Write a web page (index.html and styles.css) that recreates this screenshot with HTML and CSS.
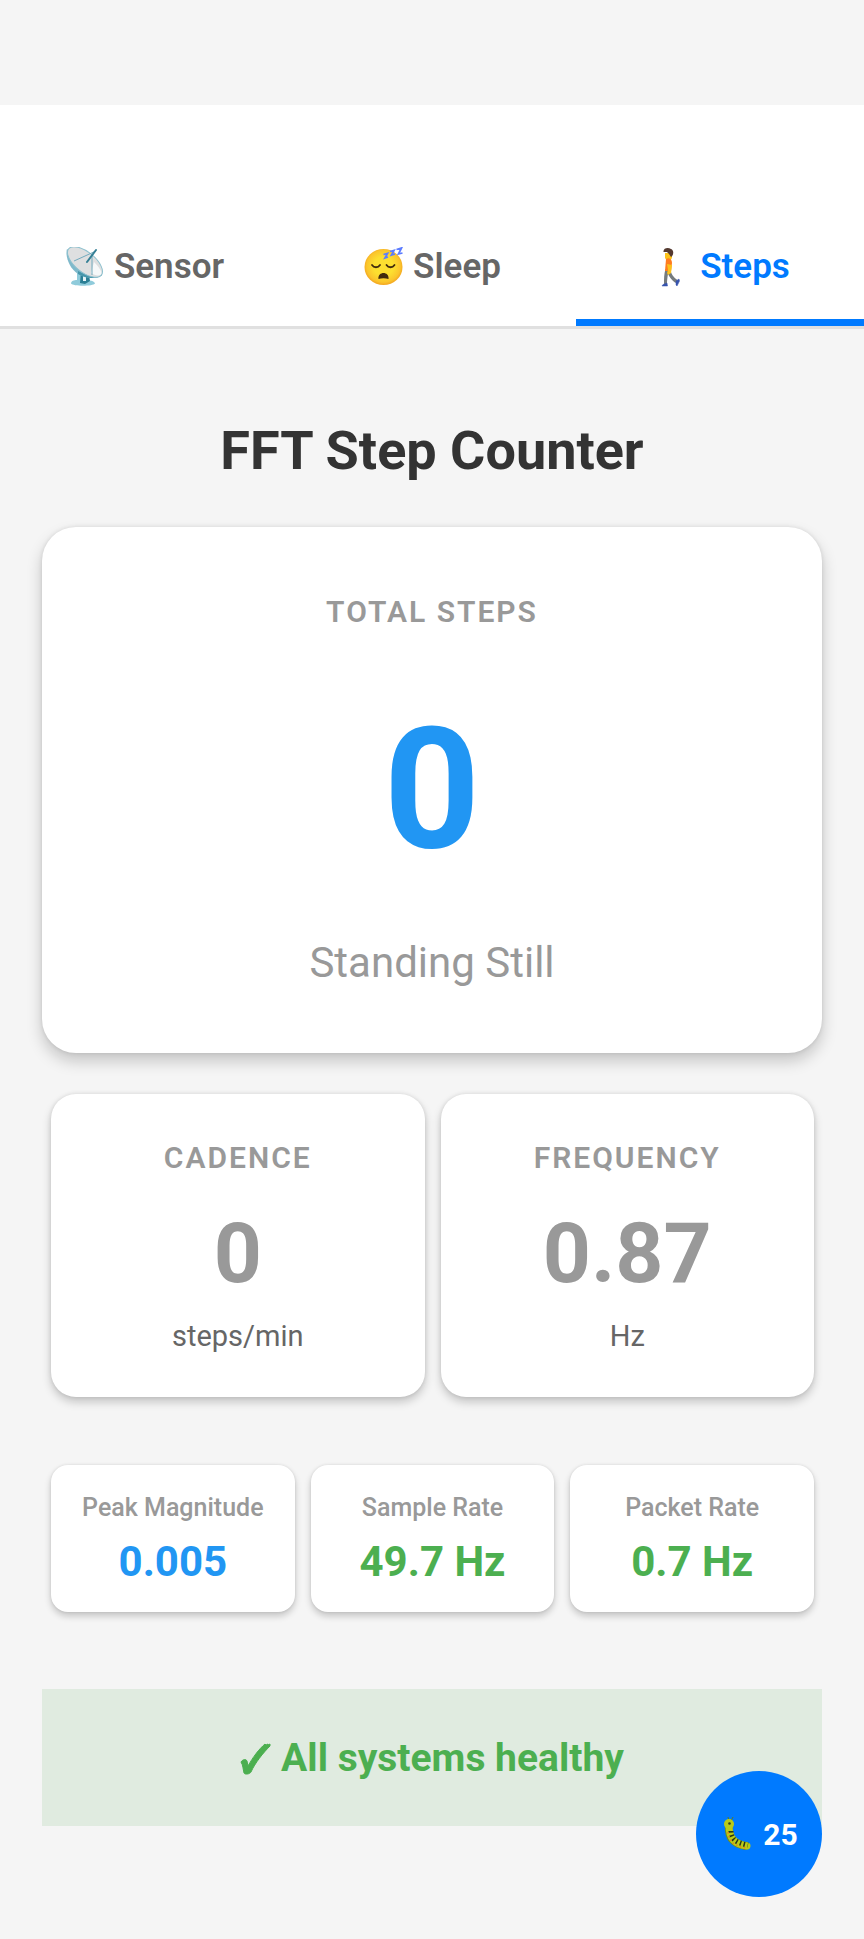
FILE: index.html
```html
<!DOCTYPE html>
<html lang="en">
<head>
<meta charset="utf-8">
<meta name="viewport" content="width=device-width, initial-scale=1">
<title>FFT Step Counter</title>
<link rel="stylesheet" href="styles.css">
</head>
<body>
<header class="header">
  <nav class="tabs">
    <button class="tab" type="button">
      <svg class="tab-icon" viewBox="0 0 40 40" aria-hidden="true">
        <path d="M7 36.500C7 34 10 33 13 33V22l6 3 1 8c5 0 11 1 11 3.500C29 39.500 9 39.500 7 36.500Z" fill="#8fcbdb"/>
        <path d="M17 24l8 4 1 6-5 3-5-1Z" fill="#2b7f95"/>
        <path d="M19 28h3v6h-3Z" fill="#e6f4f7"/>
        <path d="M3 2C1 9 5 21 14 27c8 5 20 5 24 1Z" fill="#7fb9cb"/>
        <path d="M14 27c8 5 20 5 24 1l-2-1c-6 2-15 1-22-3Z" fill="#4796ab"/>
        <ellipse cx="21" cy="15" rx="21" ry="10" transform="rotate(39 21 15)" fill="#dedfe0" stroke="#8cc0ce"/>
        <path d="M30 15C37 22 39 27 36 28c-2 1-6 0-9-2Z" fill="#f6f8f9"/>
        <path d="M10 14L32 4M28 7v21" fill="none" stroke="#72aabd"/>
        <path d="M32 3L23 15" stroke="#347f95" stroke-width="2" stroke-linecap="round"/>
      </svg>
      <span>Sensor</span>
    </button>
    <button class="tab" type="button">
      <svg class="tab-icon" viewBox="0 0 40 40" aria-hidden="true">
        <defs>
          <radialGradient id="face" cx="50%" cy="48%" r="52%">
            <stop offset="50%" stop-color="#fddf30"/>
            <stop offset="85%" stop-color="#fbc52c"/>
            <stop offset="100%" stop-color="#f3a51f"/>
          </radialGradient>
        </defs>
        <ellipse cx="20.500" cy="20" rx="19" ry="18" fill="url(#face)"/>
        <path d="M9 18c2 3 6 3 8 0M23.500 18c2 3 6 3 8 0" fill="none" stroke="#422b0d" stroke-width="1.800" stroke-linecap="round"/>
        <path d="M15.500 32c-1-8 11-8 10 0-3-1-7-1-10 0Z" fill="#422b0d"/>
        <path d="M20.500 7.500l4-1-2.500 4.500 3-1M27 4.500l4-1-2.500 4.500 3.500-1M33.500 2.500l5-1.500-3 6 4-1" fill="none" stroke="#5c7cff" stroke-width="1.800"/>
      </svg>
      <span>Sleep</span>
    </button>
    <button class="tab tab-active" type="button" aria-current="page">
      <svg class="tab-icon" viewBox="0 0 40 40" aria-hidden="true">
        <path d="M15 6h7v5l-2 3h-3l-2-3Z" fill="#fcc21b"/>
        <path d="M13.500 5C13 1 18 0 21 2c3 1 3 6 0 8l-2-3-2-2Z" fill="#543930"/>
        <path d="M15.500 22l5 1c1 5 3 7 7 10l-2 3c-4-3-6-6-7.500-9-.5 3-1 6-1 10h-3c0-5 0-10 1.500-15Z" fill="#757b7e"/>
        <path d="M16 12c4-2 6 1 6 4l-1 8h-6Z" fill="#ff7d1f"/>
        <path d="M17 17l5 1-1 8-3 2-1-2 1-3Z" fill="#fcc21b"/>
        <path d="M17 36l.5 3H12l1-1.500ZM26 34l3-2 .500 2-2.500 5-1-1Z" fill="#3653ad" stroke="#3653ad" stroke-width=".5"/>
      </svg>
      <span>Steps</span>
    </button>
  </nav>
</header>

<main class="content">
  <h1 class="title">FFT Step Counter</h1>

  <section class="card total">
    <h2 class="label">TOTAL STEPS</h2>
    <p class="total-value">0</p>
    <p class="total-status">Standing Still</p>
  </section>

  <div class="metrics">
    <section class="card metric">
      <h2 class="label">CADENCE</h2>
      <p class="metric-value">0</p>
      <p class="metric-unit">steps/min</p>
    </section>
    <section class="card metric">
      <h2 class="label">FREQUENCY</h2>
      <p class="metric-value">0.87</p>
      <p class="metric-unit">Hz</p>
    </section>
  </div>

  <div class="stats">
    <section class="card stat">
      <h2 class="stat-label">Peak Magnitude</h2>
      <p class="stat-value stat-blue">0.005</p>
    </section>
    <section class="card stat">
      <h2 class="stat-label">Sample Rate</h2>
      <p class="stat-value">49.7 Hz</p>
    </section>
    <section class="card stat">
      <h2 class="stat-label">Packet Rate</h2>
      <p class="stat-value">0.7 Hz</p>
    </section>
  </div>

  <p class="health" role="status">
    <svg class="check" viewBox="0 0 32 32" aria-hidden="true">
      <path d="M1 19c2-3 5-3 6-1l1 5C13 14 19 6 25 1l1 1 2-1 0 1 2-1 0 2C23 10 15 20 11 29c-1 2-6 3-7 1C3 26 3 22 1 19Z" fill="#4caf50" stroke="#4caf50"/>
    </svg>
    <span>All systems healthy</span>
  </p>
</main>

<button class="debug" type="button" aria-label="Debug log, 25 entries">
  <svg class="bug" viewBox="0 0 36 36" aria-hidden="true">
    <path d="M9 5l-1-4M11 5l2-4" stroke="#5d7c22" fill="none"/>
    <path d="M9 9c-1 14 5 19 18 21" fill="none" stroke="#6c8b20" stroke-width="8" stroke-linecap="round" stroke-dasharray="2 2"/>
    <path d="M9 9c0 13 5 19 18 21" fill="none" stroke="#b8cb18" stroke-width="7" stroke-linecap="round"/>
    <path d="M11 15c0 8 5 12 17 14" fill="none" stroke="#25331d" stroke-width="5" stroke-dasharray="1.500 2.500"/>
    <path d="M8 16c1 9 6 14 18 16" fill="none" stroke="#ef7d19" stroke-width="1.500" stroke-dasharray="1.500 2.500"/>
    <circle cx="9" cy="8" r="5" fill="#b8cb18"/>
    <circle cx="9.500" cy="7.500" r="1.300" fill="#34431b"/>
  </svg>
  <span>25</span>
</button>
</body>
</html>
```
FILE: styles.css
```css
* {
  box-sizing: border-box;
}

body {
  margin: 0;
  padding-top: 105px;
  background: #f5f5f5;
  color: #333;
  font-family: Roboto, "Liberation Sans", sans-serif;
}

h1, h2, p {
  margin: 0;
}

button {
  font-family: inherit;
  border: 0;
  cursor: pointer;
}

.header {
  padding-top: 105px;
  background: #fff;
  border-bottom: 3px solid #e0e0e0;
}

.tabs {
  display: grid;
  grid-template-columns: repeat(3, 1fr);
}

.tab {
  display: flex;
  align-items: center;
  justify-content: center;
  gap: 10px;
  padding: 36px 0 32px;
  background: none;
  border-bottom: 7px solid transparent;
  color: #666;
  font-size: 35px;
  font-weight: 600;
  line-height: 41px;
}

.tab-active {
  border-bottom-color: #007aff;
  color: #007aff;
}

.tab-icon {
  width: 40px;
  height: 40px;
}

.content {
  padding: 86px 42px 114px;
  text-align: center;
}

.title {
  margin-bottom: 40px;
  font-size: 54px;
  font-weight: 700;
  line-height: 72px;
}

.card {
  background: #fff;
}

.label {
  color: #999;
  font-size: 30px;
  font-weight: 600;
  line-height: 36px;
  letter-spacing: 2px;
}

.total {
  padding: 67px 42px 65px;
  border-radius: 34px;
  box-shadow: 0 8px 16px rgba(0, 0, 0, 0.2), 0 0 4px rgba(0, 0, 0, 0.1);
}

.total-value {
  margin: 60px 0 48px;
  color: #2196f3;
  font-size: 168px;
  font-weight: 700;
  line-height: 200px;
}

.total-status {
  color: #999;
  font-size: 42px;
  line-height: 50px;
}

.metrics {
  display: grid;
  grid-template-columns: repeat(2, 1fr);
  gap: 16px;
  padding: 0 8px 0 9px;
  margin-top: 41px;
}

.metric {
  padding: 46px 16px 43px;
  border-radius: 25px;
  box-shadow: 0 5px 10px rgba(0, 0, 0, 0.2), 0 0 4px rgba(0, 0, 0, 0.1);
}

.metric-value {
  margin: 29px 0 15px;
  color: #999;
  font-size: 84px;
  font-weight: 700;
  line-height: 98px;
}

.metric-unit {
  color: #666;
  font-size: 29px;
  line-height: 36px;
}

.stats {
  display: grid;
  grid-template-columns: repeat(3, 1fr);
  gap: 16px;
  padding: 0 8px 0 9px;
  margin-top: 68px;
}

.stat {
  padding: 28px 8px 25px;
  border-radius: 17px;
  box-shadow: 0 4px 7px rgba(0, 0, 0, 0.2), 0 0 3px rgba(0, 0, 0, 0.1);
}

.stat-label {
  color: #999;
  font-size: 25px;
  font-weight: 500;
  line-height: 30px;
}

.stat-value {
  margin-top: 14px;
  color: #4caf50;
  font-size: 42px;
  font-weight: 700;
  line-height: 50px;
}

.stat-blue {
  color: #2196f3;
}

.health {
  display: flex;
  align-items: center;
  justify-content: center;
  gap: 9px;
  margin-top: 77px;
  padding: 47px 20px 45px;
  background: #e0ebe0;
  color: #4caf50;
  font-size: 39px;
  font-weight: 700;
  line-height: 45px;
}

.check {
  width: 32px;
  height: 32px;
}

.debug {
  position: fixed;
  right: 42px;
  bottom: 42px;
  display: flex;
  align-items: center;
  justify-content: center;
  gap: 7px;
  width: 126px;
  height: 126px;
  padding: 0;
  border-radius: 50%;
  background: #007aff;
  color: #fff;
  font-size: 30px;
  font-weight: 700;
}

.bug {
  width: 36px;
  height: 36px;
}
```
